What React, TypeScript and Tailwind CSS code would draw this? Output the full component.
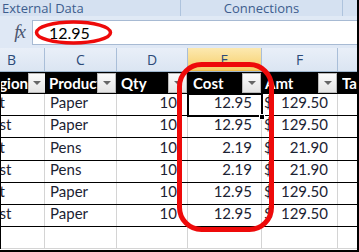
const rows = [
  { reg: 'East', prod: 'Paper', qty: '10', cost: '12.95', amt: '129.50', h: 'h-[22px]' },
  { reg: 'West', prod: 'Paper', qty: '10', cost: '12.95', amt: '129.50', h: 'h-[22px]' },
  { reg: 'East', prod: 'Pens', qty: '10', cost: '2.19', amt: '21.90', h: 'h-[23px]' },
  { reg: 'West', prod: 'Pens', qty: '10', cost: '2.19', amt: '21.90', h: 'h-[22px]' },
  { reg: 'East', prod: 'Paper', qty: '10', cost: '12.95', amt: '129.50', h: 'h-[22px]' },
  { reg: 'West', prod: 'Paper', qty: '10', cost: '12.95', amt: '129.50', h: 'h-[22px]' },
];

const sheetFont = { fontFamily: 'Lato, "Liberation Sans", sans-serif' };

function Dropdown() {
  return (
    <span className="ml-auto mr-[1px] flex h-[20px] w-[19px] shrink-0 items-center justify-center border border-[#b9b9b9] bg-gradient-to-b from-[#fbfbfb] to-[#e4e4e4]">
      <span className="h-0 w-0 border-l-[4px] border-r-[4px] border-t-[4px] border-l-transparent border-r-transparent border-t-[#666]" />
    </span>
  );
}

function ColHead({ label, w, active }: { label: string; w: string; active?: boolean }) {
  return (
    <div
      className={`${w} flex shrink-0 items-center justify-center border-r border-[#a9bed8] ${
        active ? 'bg-gradient-to-b from-[#fce9b0] to-[#f6cf68] border-b border-b-[#f0bd4c]' : ''
      }`}
    >
      {label}
    </div>
  );
}

export default function App() {
  return (
    <div
      className="relative h-[252px] w-[359px] overflow-hidden border-b-2 border-r-2 border-black bg-white"
      style={{ fontFamily: '"Open Sans", "Noto Sans", sans-serif' }}
    >
      {/* ribbon group labels */}
      <div className="flex h-[16px] bg-[#d5e1f1] text-[13px] leading-[16px] text-[#3d5d8e]">
        <div className="w-[181px] shrink-0 border-r border-[#aec3dd] pl-[2px]">External Data</div>
        <div className="w-[162px] shrink-0 border-r border-[#aec3dd] text-center">Connections</div>
        <div className="flex-1" />
      </div>
      <div className="h-[4px] bg-[#e0e9f5]" />

      {/* formula bar */}
      <div className="flex h-[25px] bg-[#dfe8f5]">
        <div
          className="flex w-[32px] shrink-0 items-center justify-center pl-[6px] text-[19px] italic text-[#4b5670]"
          style={{ fontFamily: '"Liberation Serif", serif' }}
        >
          <span className="tracking-[-2px]">fx</span>
        </div>
        <div className="flex flex-1 items-center border-y border-l border-[#a7bad3] bg-white pl-[16px] text-[16px] text-black" style={sheetFont}>
          12.95
        </div>
      </div>
      <div className="h-[3px] bg-[#dfe8f5]" />

      {/* column letters */}
      <div className="flex h-[24px] border-b border-[#9eb6ce] bg-gradient-to-b from-[#e9eff8] to-[#dbe5f2] text-[14px] text-[#2c4a78]">
        <div className="flex w-[45px] shrink-0 items-center border-r border-[#a9bed8] pl-[7px]">B</div>
        <ColHead label="C" w="w-[72px]" />
        <ColHead label="D" w="w-[71px]" />
        <ColHead label="E" w="w-[74px]" active />
        <ColHead label="F" w="w-[76px]" />
        <div className="flex-1" />
      </div>

      <div className="border-l border-black" style={sheetFont}>
        {/* table header */}
        <div className="flex h-[22px] items-center bg-black text-[15px] font-bold text-white">
          <div className="flex w-[44px] shrink-0 items-center overflow-hidden">
            <span className="ml-[-19px] whitespace-nowrap">Region</span>
            <Dropdown />
          </div>
          <div className="flex w-[72px] shrink-0 items-center overflow-hidden">
            <span className="ml-[4px] w-[52px] overflow-hidden whitespace-nowrap">Product</span>
            <Dropdown />
          </div>
          <div className="flex w-[71px] shrink-0 items-center">
            <span className="ml-[4px]">Qty</span>
            <Dropdown />
          </div>
          <div className="flex w-[74px] shrink-0 items-center">
            <span className="ml-[5px]">Cost</span>
            <Dropdown />
          </div>
          <div className="flex w-[76px] shrink-0 items-center">
            <span className="ml-[3px]">Amt</span>
            <Dropdown />
          </div>
          <div className="ml-[4px] overflow-hidden whitespace-nowrap">Tax</div>
        </div>

        {/* data rows */}
        {rows.map((r, i) => (
          <div key={i} className={`${r.h} flex border-b border-black text-[15px] text-[#1c2333]`}>
            <div className="flex w-[44px] shrink-0 items-end overflow-hidden border-r border-[#d4d4d4] pb-[2px]">
              <span className="ml-[-24px] whitespace-nowrap">{r.reg}</span>
            </div>
            <div className="flex w-[72px] shrink-0 items-end border-r border-[#d4d4d4] pb-[2px] pl-[5px]">{r.prod}</div>
            <div className="flex w-[71px] shrink-0 items-end justify-end border-r border-[#d4d4d4] pb-[2px] pr-[10px]">{r.qty}</div>
            <div className="flex w-[74px] shrink-0 items-end justify-end border-r border-[#d4d4d4] pb-[2px] pr-[9px]">{r.cost}</div>
            <div className="flex w-[76px] shrink-0 items-end justify-between border-r border-[#d4d4d4] pb-[2px] pl-[2px] pr-[9px]">
              <span>$</span>
              <span>{r.amt}</span>
            </div>
            <div className="flex-1" />
          </div>
        ))}
        <div className="flex h-[22px] border-b border-[#d4d4d4]">
          <div className="w-[44px] shrink-0 border-r border-[#d4d4d4]" />
          <div className="w-[72px] shrink-0 border-r border-[#d4d4d4]" />
          <div className="w-[71px] shrink-0 border-r border-[#d4d4d4]" />
          <div className="w-[74px] shrink-0 border-r border-[#d4d4d4]" />
          <div className="w-[76px] shrink-0 border-r border-[#d4d4d4]" />
          <div className="flex-1" />
        </div>
      </div>

      {/* active cell */}
      <div className="pointer-events-none absolute left-[187px] top-[93px] h-[24px] w-[76px] border-2 border-black" />
      <div className="pointer-events-none absolute left-[259px] top-[114px] h-[6px] w-[6px] border border-white bg-black" />

      {/* red annotations */}
      <svg className="pointer-events-none absolute left-0 top-0" width="359" height="252" viewBox="0 0 359 252">
        <ellipse cx="73.5" cy="32.5" rx="37" ry="10.5" fill="none" stroke="#ee0a0a" strokeWidth="3.5" />
        <rect x="179.5" y="64.5" width="92" height="165" rx="22" fill="none" stroke="#ee0a0a" strokeWidth="5" />
      </svg>
    </div>
  );
}
